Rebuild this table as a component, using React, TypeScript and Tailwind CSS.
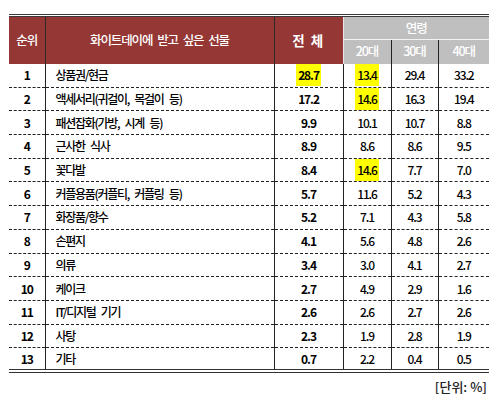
import React from "react";

type Row = {
  rank: number;
  name: string;
  total: string;
  a20: string;
  a30: string;
  a40: string;
  h20?: boolean;
  hTotal?: boolean;
};

const rows: Row[] = [
  { rank: 1, name: "상품권/현금", total: "28.7", a20: "13.4", a30: "29.4", a40: "33.2", hTotal: true, h20: true },
  { rank: 2, name: "액세서리(귀걸이, 목걸이 등)", total: "17.2", a20: "14.6", a30: "16.3", a40: "19.4", h20: true },
  { rank: 3, name: "패션잡화(가방, 시계 등)", total: "9.9", a20: "10.1", a30: "10.7", a40: "8.8" },
  { rank: 4, name: "근사한 식사", total: "8.9", a20: "8.6", a30: "8.6", a40: "9.5" },
  { rank: 5, name: "꽃다발", total: "8.4", a20: "14.6", a30: "7.7", a40: "7.0", h20: true },
  { rank: 6, name: "커플용품(커플티, 커플링 등)", total: "5.7", a20: "11.6", a30: "5.2", a40: "4.3" },
  { rank: 7, name: "화장품/향수", total: "5.2", a20: "7.1", a30: "4.3", a40: "5.8" },
  { rank: 8, name: "손편지", total: "4.1", a20: "5.6", a30: "4.8", a40: "2.6" },
  { rank: 9, name: "의류", total: "3.4", a20: "3.0", a30: "4.1", a40: "2.7" },
  { rank: 10, name: "케이크", total: "2.7", a20: "4.9", a30: "2.9", a40: "1.6" },
  { rank: 11, name: "IT/디지털 기기", total: "2.6", a20: "2.6", a30: "2.7", a40: "2.6" },
  { rank: 12, name: "사탕", total: "2.3", a20: "1.9", a30: "2.8", a40: "1.9" },
  { rank: 13, name: "기타", total: "0.7", a20: "2.2", a30: "0.4", a40: "0.5" },
];

const font = { fontFamily: '"Noto Sans CJK KR", "Noto Sans", sans-serif' };

function Hl({ on, children }: { on?: boolean; children: React.ReactNode }) {
  if (!on) return <>{children}</>;
  return (
    <span className="inline-block bg-[#ffff00] h-[22px] leading-[22px] px-[2px] align-middle">{children}</span>
  );
}

export default function App() {
  return (
    <div className="w-[500px] h-[416px] bg-white text-black" style={font}>
      <div className="pt-[14px] pl-[9px]">
        <table className="w-[480px] table-fixed border-collapse text-[12px] font-medium tracking-[-1.1px] border-t-[3px] border-double border-t-[#3a3a3a] border-b-[4px] border-b-[#333]">
          <colgroup>
            <col className="w-[36px]" />
            <col className="w-[229px]" />
            <col className="w-[69px]" />
            <col className="w-[48px]" />
            <col className="w-[47px]" />
            <col className="w-[51px]" />
          </colgroup>
          <thead>
            <tr className="h-[24px]">
              <th rowSpan={2} className="bg-[#953735] text-white text-[12.5px] font-medium border-r border-[#2a2a2a]">
                순위
              </th>
              <th rowSpan={2} className="bg-[#953735] text-white text-[12.5px] font-medium border-r border-[#2a2a2a] [word-spacing:3px]">
                화이트데이에 받고 싶은 선물
              </th>
              <th rowSpan={2} className="bg-[#953735] text-white font-bold text-[13.5px] tracking-[1.5px] border-r border-[#e8e8e8]">
                전 체
              </th>
              <th colSpan={3} className="bg-[#bfbfbf] text-white text-[12.5px] font-medium border-b border-[#f2f2f2]">
                연령
              </th>
            </tr>
            <tr className="h-[24px]">
              <th className="bg-[#bfbfbf] text-white text-[12.5px] font-medium border-r border-[#222]">20대</th>
              <th className="bg-[#bfbfbf] text-white text-[12.5px] font-medium border-r border-[#222]">30대</th>
              <th className="bg-[#bfbfbf] text-white text-[12.5px] font-medium">40대</th>
            </tr>
          </thead>
          <tbody>
            {rows.map((r, i) => (
              <tr
                key={r.rank}
                className={
                  "h-[23.7px] " + (i < rows.length - 1 ? "border-b border-dashed border-b-[#222]" : "")
                }
              >
                <td className="text-center font-bold border-r border-r-[#222]">{r.rank}</td>
                <td className="pl-[10px] text-left border-r border-r-[#222] whitespace-nowrap tracking-[-1.3px] [word-spacing:4px]">
                  {r.name}
                </td>
                <td className="text-center font-bold border-r border-r-[#222]">
                  <Hl on={r.hTotal}>{r.total}</Hl>
                </td>
                <td className="text-center border-r border-r-[#222]">
                  <Hl on={r.h20}>{r.a20}</Hl>
                </td>
                <td className="text-center border-r border-r-[#222]">{r.a30}</td>
                <td className="text-center">{r.a40}</td>
              </tr>
            ))}
          </tbody>
        </table>
        <div className="w-[478px] text-right text-[13px] font-medium mt-[4px] text-[#222]">[단위: %]</div>
      </div>
    </div>
  );
}
